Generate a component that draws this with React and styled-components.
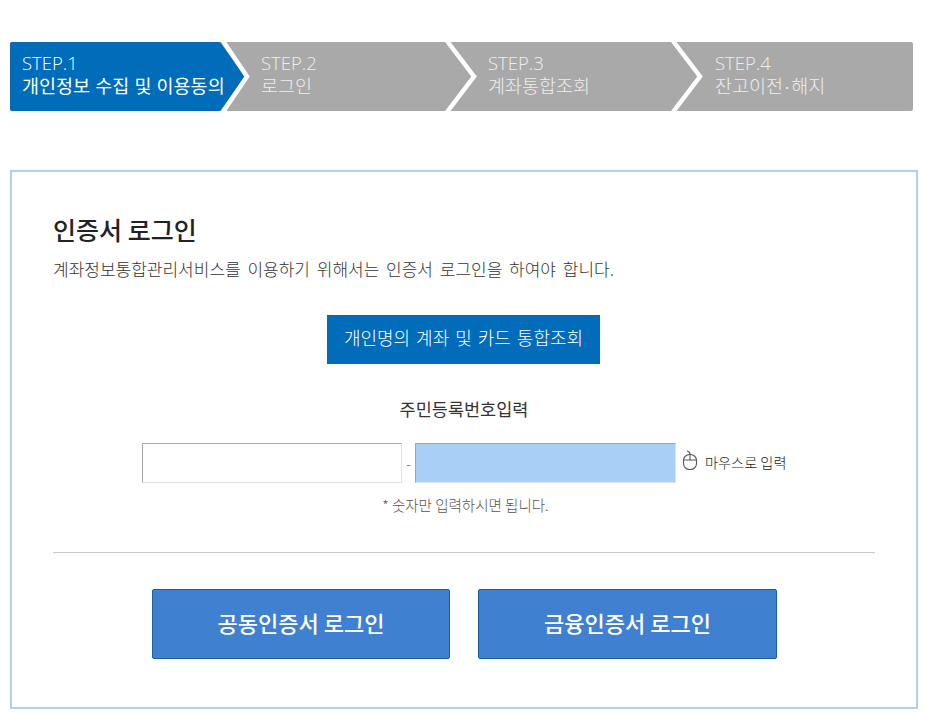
import React from 'react';
import styled, { createGlobalStyle } from 'styled-components';

const Global = createGlobalStyle`
  html, body { margin: 0; padding: 0; background: #fff; }
  body { font-family: "Noto Sans CJK KR", "Noto Sans", sans-serif; color: #333; }
`;

const Page = styled.div`
  width: 930px;
  height: 722px;
  padding: 42px 12px 0 10px;
  box-sizing: border-box;
  overflow: hidden;
`;

const StepsWrap = styled.div`
  position: relative;
  width: 903px;
`;

const Steps = styled.ol`
  display: flex;
  width: 903px;
  height: 69px;
  margin: 0;
  padding: 0;
  list-style: none;
  background: #a9a9a9;
  border-radius: 2px;
  overflow: hidden;
`;

const Step = styled.li`
  flex: 0 0 ${p => p.$w}px;
  box-sizing: border-box;
  padding: 9px 0 0 ${p => p.$pad}px;
  font-weight: 300;
  font-size: 18.5px;
  line-height: 23px;
  word-spacing: 1px;
  color: ${p => (p.$active ? '#fff' : '#eee')};
  background: ${p => (p.$active ? '#006cba' : 'transparent')};
  clip-path: ${p => (p.$active ? 'polygon(0 0, 210px 0, 235px 50%, 210px 100%, 0 100%)' : 'none')};
  white-space: nowrap;
`;

const StepNo = styled.div`
  font-family: "Open Sans", sans-serif;
  font-weight: 300;
  font-size: 18.5px;
`;

const StepName = styled.div`
  font-weight: ${p => (p.$active ? 400 : 300)};
`;

const NameDot = styled.span`
  font-family: "Liberation Sans", sans-serif;
  margin: 0 1px;
`;

const Chevron = styled.svg`
  position: absolute;
  top: 0;
  left: ${p => p.$x}px;
  width: 34px;
  height: 69px;
`;

const Card = styled.section`
  width: 908px;
  height: 539px;
  margin-top: 59px;
  box-sizing: border-box;
  padding: 40px 41px 0;
  border: 2px solid #b3d1e6;
`;

const Title = styled.h2`
  margin: 0;
  font-size: 25px;
  line-height: 34px;
  font-weight: 500;
  color: #222;
`;

const Desc = styled.p`
  margin: 11px 0 0;
  font-size: 17px;
  line-height: 24px;
  word-spacing: 3px;
  font-weight: 300;
  color: #333;
`;

const Center = styled.div`
  display: flex;
  flex-direction: column;
  align-items: center;
`;

const OwnButton = styled.button`
  width: 273px;
  height: 49px;
  margin: 34px 1px 0 0;
  padding: 0 0 5px;
  border: 0;
  background: #006cba;
  color: #fff;
  font-family: inherit;
  font-size: 18px;
  word-spacing: 2px;
  font-weight: 300;
`;

const FieldLabel = styled.div`
  margin-top: 33px;
  font-size: 17.5px;
  line-height: 24px;
  font-weight: 400;
  color: #333;
`;

const IdRow = styled.div`
  display: flex;
  align-items: center;
  margin: 22px 0 0 89px;
  height: 40px;
`;

const IdInput = styled.div`
  width: ${p => p.$w}px;
  height: 40px;
  box-sizing: border-box;
  border-style: solid;
  border-width: 1px;
  border-color: #a5a5a5 #e2e2e2 #e2e2e2 #a5a5a5;
  background: ${p => (p.$masked ? '#a8cff5' : '#fff')};
`;

const Dash = styled.span`
  width: 13px;
  text-align: center;
  font-size: 12px;
  color: #666;
`;

const MouseLink = styled.span`
  display: flex;
  align-items: center;
  margin-left: 6px;
  padding-bottom: 2px;
  font-size: 14.2px;
  font-weight: 300;
  color: #222;
`;

const MouseIcon = styled.svg`
  width: 16px;
  height: 21px;
  margin-right: 7px;
  transform: translateY(-2px);
`;

const Note = styled.div`
  margin: 12px 0 0 3px;
  font-size: 14.5px;
  line-height: 20px;
  font-weight: 300;
  color: #555;
  text-align: center;
`;

const Divider = styled.hr`
  margin: 37px 0 0;
  border: 0;
  border-top: 1px solid #c8c8c8;
`;

const LoginRow = styled.div`
  display: flex;
  gap: 28px;
  margin: 36px 0 0 99px;
`;

const LoginButton = styled.button`
  width: ${p => p.$w}px;
  height: 70px;
  padding: 0 0 4px;
  box-sizing: border-box;
  border: 1px solid #1c5f9f;
  border-radius: 2px;
  background: #3f80d0;
  color: #fff;
  font-family: inherit;
  font-size: 22px;
  font-weight: 500;
`;

const steps = [
  { no: 'STEP.1', name: ['개인정보 수집 및 이용동의'], w: 237, pad: 12, active: true },
  { no: 'STEP.2', name: ['로그인'], w: 227, pad: 14 },
  { no: 'STEP.3', name: ['계좌통합조회'], w: 227, pad: 14 },
  { no: 'STEP.4', name: ['잔고이전', '해지'], w: 212, pad: 14 },
];

export default function App() {
  return (
    <Page>
      <Global />
      <StepsWrap>
        <Steps>
          {steps.map(s => (
            <Step key={s.no} $w={s.w} $pad={s.pad} $active={s.active}>
              <StepNo>{s.no}</StepNo>
              <StepName $active={s.active}>
                {s.name[0]}
                {s.name[1] && <NameDot>·</NameDot>}
                {s.name[1]}
              </StepName>
            </Step>
          ))}
        </Steps>
        {[[210, 27], [434, 30], [660, 30]].map(([x, tip]) => (
          <Chevron key={x} $x={x} viewBox="0 0 34 69" aria-hidden="true">
            <polyline points={`3,-1 ${tip},34.5 3,70`} fill="none" stroke="#fff" strokeWidth="4.5" />
          </Chevron>
        ))}
      </StepsWrap>
      <Card>
        <Title>인증서 로그인</Title>
        <Desc>계좌정보통합관리서비스를 이용하기 위해서는 인증서 로그인을 하여야 합니다.</Desc>
        <Center>
          <OwnButton>개인명의 계좌 및 카드 통합조회</OwnButton>
          <FieldLabel>주민등록번호입력</FieldLabel>
        </Center>
        <IdRow>
          <IdInput $w={260} />
          <Dash>-</Dash>
          <IdInput $w={261} $masked />
          <MouseLink>
            <MouseIcon viewBox="0 0 16 21" fill="none" stroke="#555" strokeWidth="1.1">
              <rect x="1.5" y="4.5" width="13" height="15" rx="6" />
              <path d="M1.6 10h12.8M8 4.5V10M8 4.5C8 2.5 7 1.5 5 1" />
            </MouseIcon>
            마우스로 입력
          </MouseLink>
        </IdRow>
        <Note>* 숫자만 입력하시면 됩니다.</Note>
        <Divider />
        <LoginRow>
          <LoginButton $w={298}>공동인증서 로그인</LoginButton>
          <LoginButton $w={299}>금융인증서 로그인</LoginButton>
        </LoginRow>
      </Card>
    </Page>
  );
}
